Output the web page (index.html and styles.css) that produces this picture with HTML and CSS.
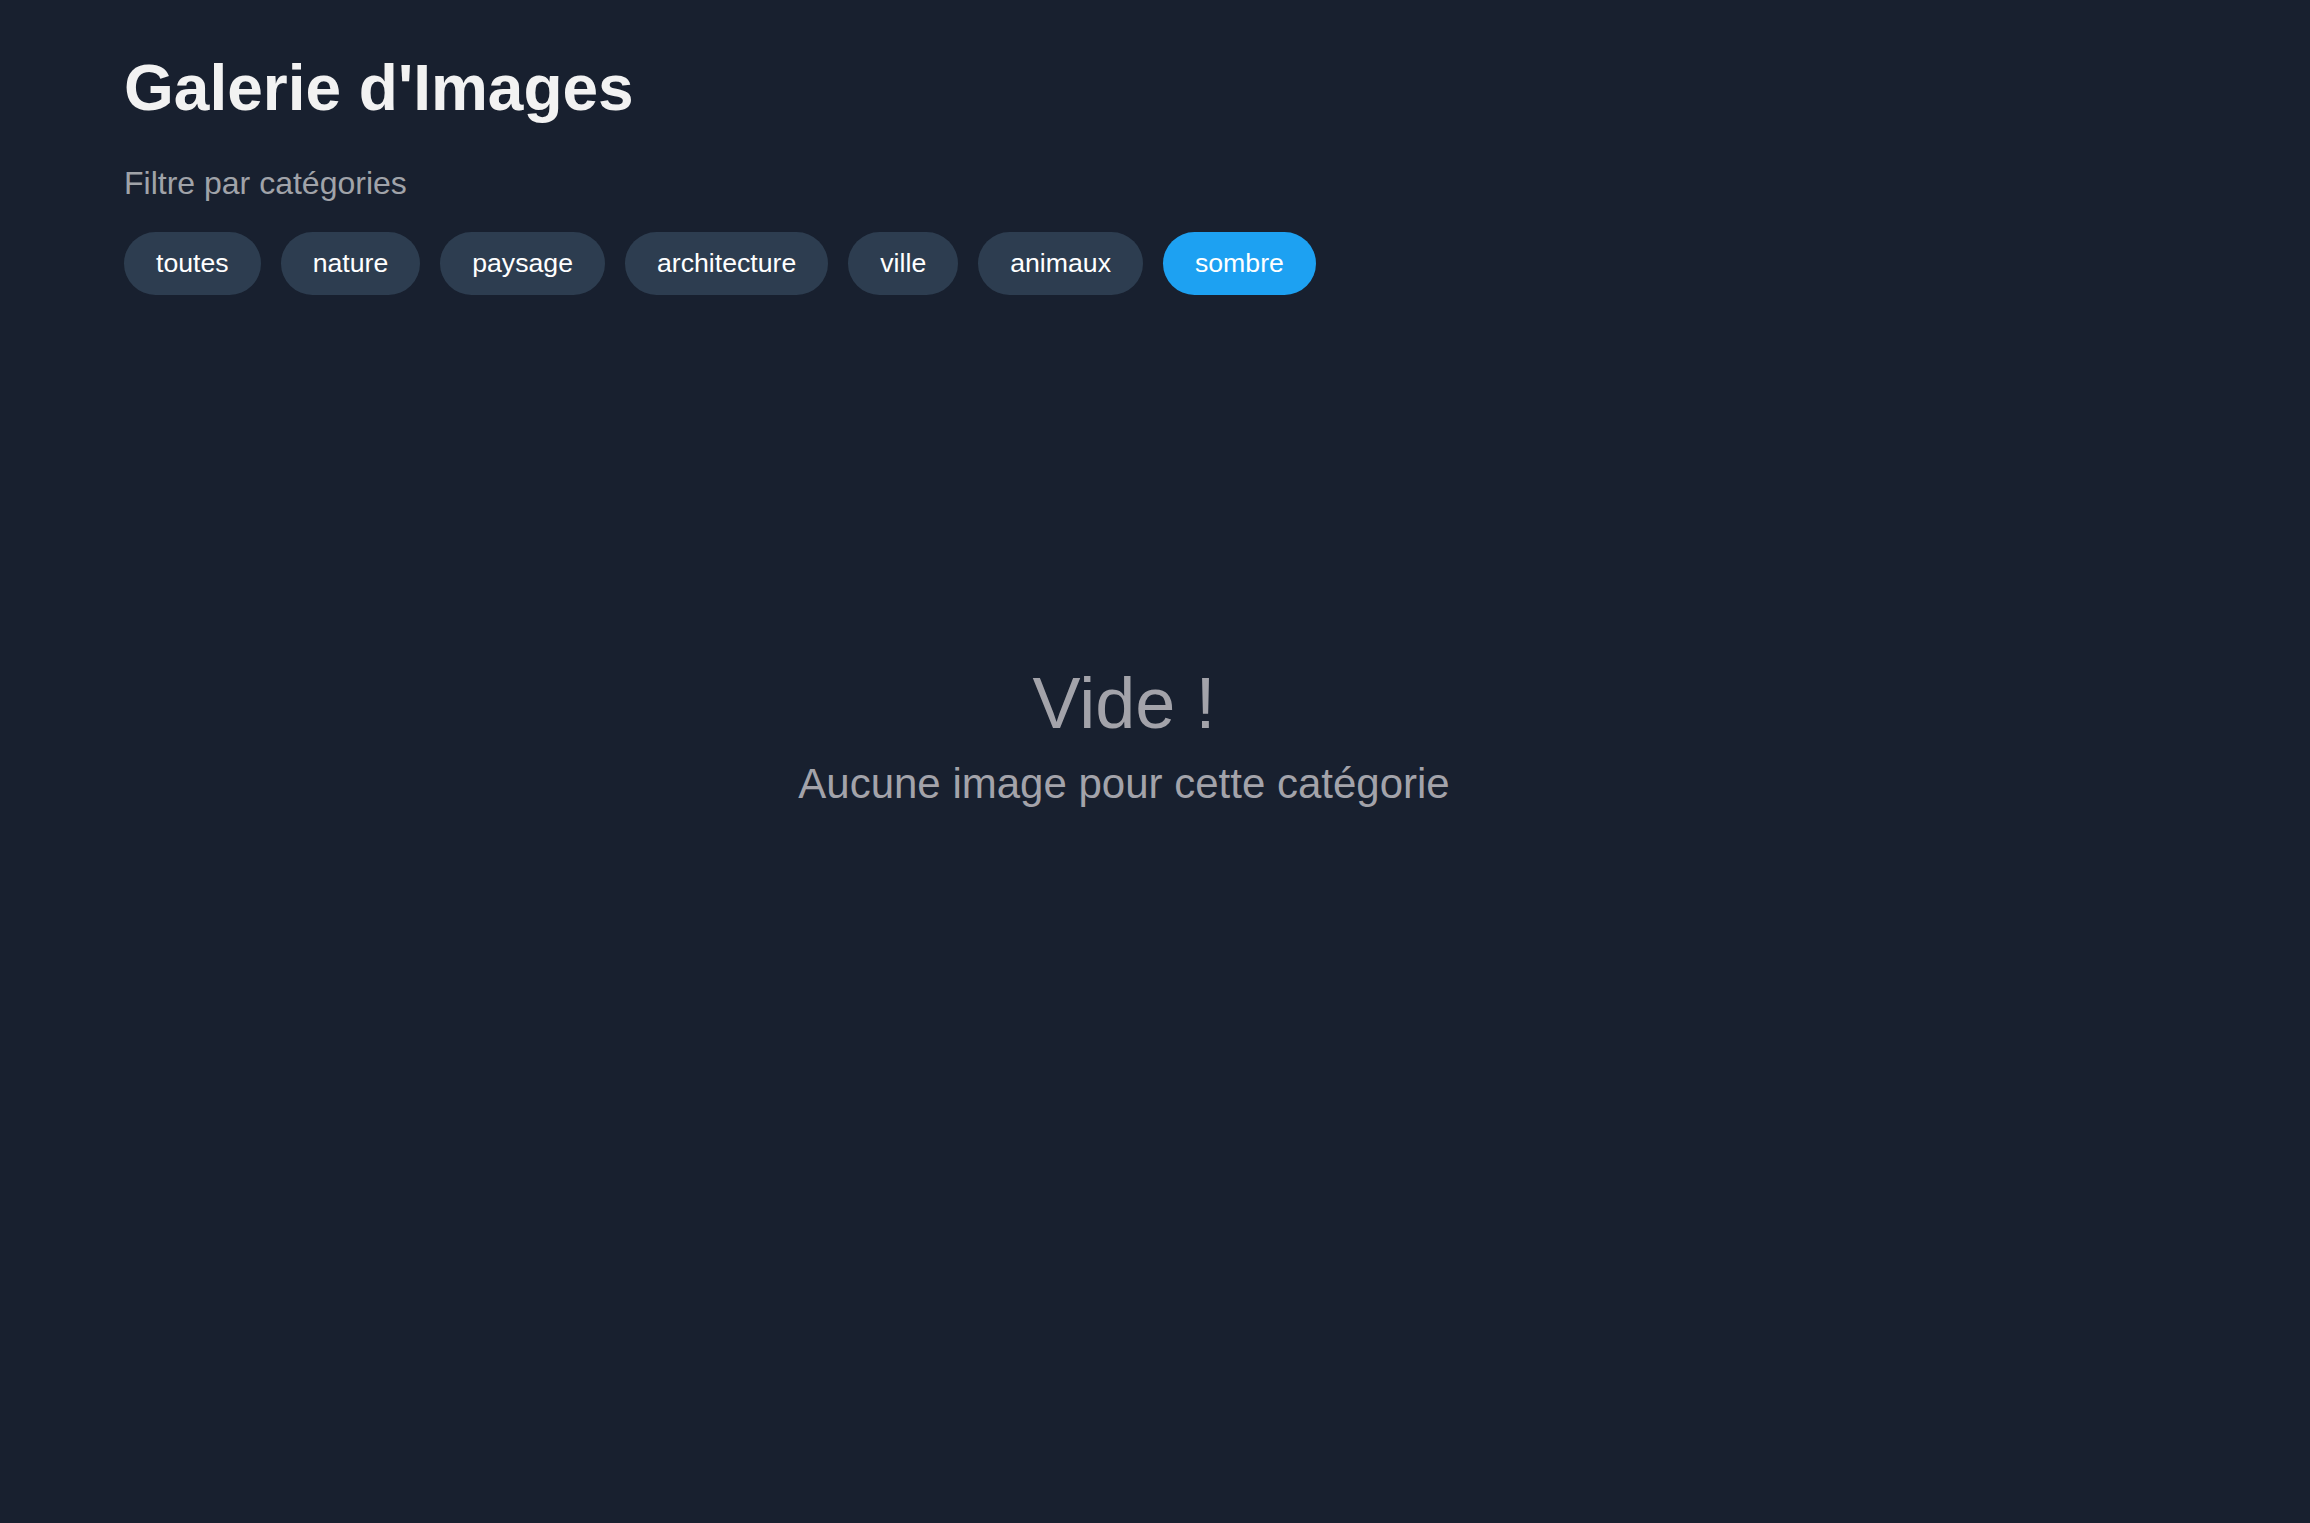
FILE: index.html
```html
<!DOCTYPE html>
<html lang="fr">
<head>
<meta charset="utf-8">
<title>Galerie d'Images</title>
<link rel="stylesheet" href="styles.css">
</head>
<body>
<main class="page">
  <h1 class="title">Galerie d'Images</h1>
  <p class="subtitle">Filtre par catégories</p>
  <div class="filters">
    <button class="pill">toutes</button>
    <button class="pill">nature</button>
    <button class="pill">paysage</button>
    <button class="pill">architecture</button>
    <button class="pill">ville</button>
    <button class="pill">animaux</button>
    <button class="pill pill-active">sombre</button>
  </div>
  <section class="empty">
    <h2 class="empty-title">Vide !</h2>
    <p class="empty-text">Aucune image pour cette catégorie</p>
  </section>
</main>
</body>
</html>
```

FILE: styles.css
```css
html, body {
  margin: 0;
  padding: 0;
  background: #18202f;
  min-height: 100%;
}

body {
  font-family: "Liberation Sans", Arial, sans-serif;
  color: #f2f2f2;
}

.page {
  box-sizing: border-box;
  min-height: 1523px;
  padding: 51px 186px 0 124px;
}

.title {
  margin: 0;
  font-size: 64px;
  font-weight: 700;
  line-height: normal;
  color: #f2f2f2;
}

.subtitle {
  margin: 40px 0 0;
  font-size: 32px;
  line-height: normal;
  color: #a0a3a9;
}

.filters {
  display: flex;
  flex-wrap: wrap;
  gap: 20px;
  margin-top: 30px;
}

.pill {
  font-family: "Liberation Sans", Arial, sans-serif;
  font-size: 26.66px;
  line-height: normal;
  padding: 16px 32px;
  border: none;
  border-radius: 999px;
  background: #2d3d50;
  color: #ffffff;
  cursor: pointer;
}

.pill-active {
  background: #1da1f2;
}

.empty {
  margin-top: 367px;
  display: flex;
  flex-direction: column;
  align-items: center;
  text-align: center;
}

.empty-title {
  margin: 0;
  font-size: 72px;
  font-weight: 400;
  line-height: normal;
  color: #a3a3aa;
}

.empty-text {
  margin: 15.5px 0 0;
  font-size: 42px;
  line-height: normal;
  color: #a3a3aa;
}
```
